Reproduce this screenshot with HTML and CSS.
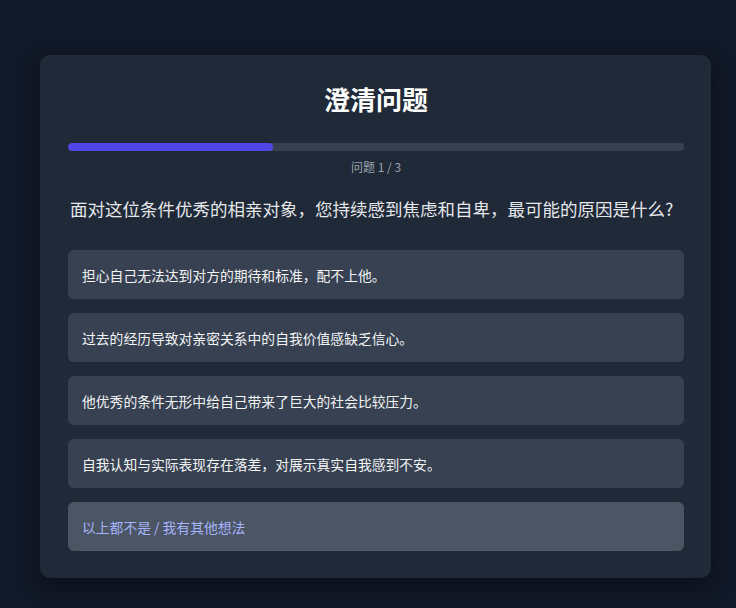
FILE: index.html
```html
<!DOCTYPE html>
<html lang="zh-CN">
<head>
    <meta charset="UTF-8">
    <meta name="viewport" content="width=device-width, initial-scale=1.0">
    <title>澄清问题</title>
    <link rel="stylesheet" href="styles.css">
</head>
<body>
    <div class="quiz-card">
        <h1 class="quiz-title">澄清问题</h1>
        <div class="progress-track">
            <div class="progress-fill" style="width: 33.33%"></div>
        </div>
        <div class="progress-label">问题 1 / 3</div>
        <p class="question">面对这位条件优秀的相亲对象，您持续感到焦虑和自卑，最可能的原因是什么?</p>
        <div class="options">
            <button class="option">担心自己无法达到对方的期待和标准，配不上他。</button>
            <button class="option">过去的经历导致对亲密关系中的自我价值感缺乏信心。</button>
            <button class="option">他优秀的条件无形中给自己带来了巨大的社会比较压力。</button>
            <button class="option">自我认知与实际表现存在落差，对展示真实自我感到不安。</button>
            <button class="option option-other">以上都不是 / 我有其他想法</button>
        </div>
    </div>
</body>
</html>
```

FILE: styles.css
```css
body, html {
    margin: 0;
    padding: 0;
    background-color: #111827;
    font-family: "Noto Sans CJK SC", "Noto Sans", sans-serif;
}
body {
    padding: 55px 0 0 40px;
    height: 608px;
    box-sizing: border-box;
    overflow: hidden;
}
.quiz-card {
    width: 671px;
    box-sizing: border-box;
    padding: 28px 27px 27px 28px;
    background-color: #1f2937;
    border-radius: 10px;
    box-shadow: 0 8px 20px rgba(0, 0, 0, 0.35);
}
.quiz-title {
    margin: 0 0 28px;
    font-size: 26px;
    line-height: 31.5px;
    font-weight: 700;
    text-align: center;
    color: #ffffff;
}
.progress-track {
    height: 8.75px;
    background-color: #374151;
    border-radius: 999px;
    overflow: hidden;
}
.progress-fill {
    height: 100%;
    background-color: #4f46e5;
    border-radius: 999px;
}
.progress-label {
    margin-top: 7px;
    font-size: 12px;
    line-height: 17.5px;
    text-align: center;
    color: #9ca3af;
}
.question {
    margin: 21px 0 29px;
    font-size: 17.5px;
    line-height: 24.5px;
    color: #e5e7eb;
    padding-left: 2px;
}
.options {
    display: flex;
    flex-direction: column;
    gap: 14px;
}
.option {
    display: block;
    width: 100%;
    height: 49px;
    padding: 0 14px;
    text-align: left;
    font-family: inherit;
    font-size: 13.8px;
    color: #f3f4f6;
    background-color: #374151;
    border: none;
    border-radius: 6px;
    cursor: pointer;
}
.option-other {
    background-color: #4b5563;
    color: #a5b4fc;
}
```
